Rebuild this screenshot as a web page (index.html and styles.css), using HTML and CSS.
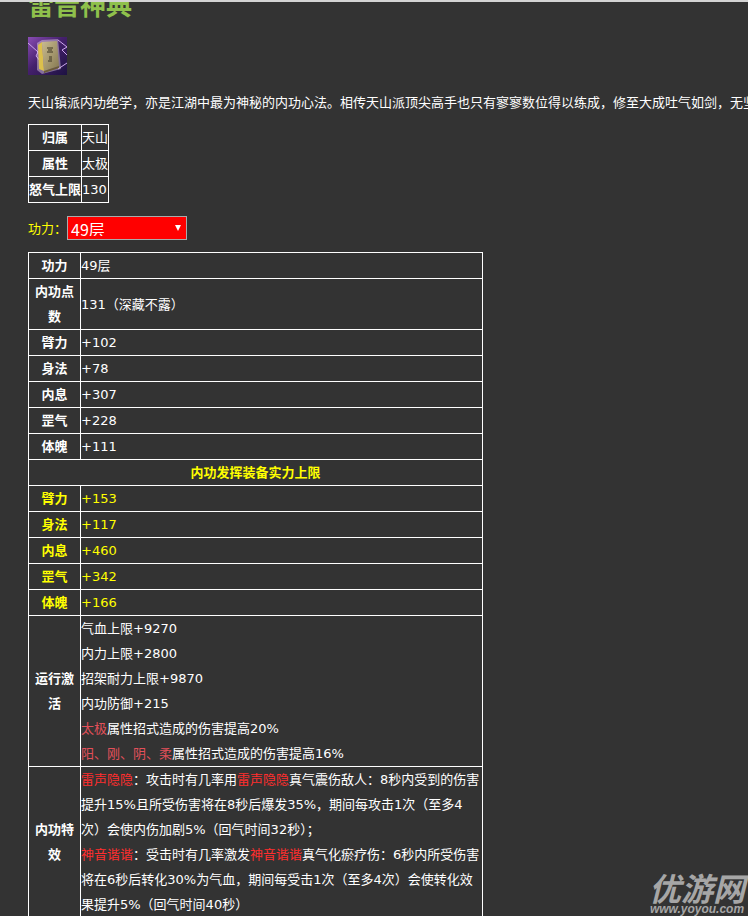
FILE: index.html
```html
<!DOCTYPE html>
<html lang="zh">
<head>
<meta charset="utf-8">
<title>雷音神典</title>
<link rel="stylesheet" href="styles.css">
</head>
<body>
<main class="page">
  <h2 class="title">雷音神典</h2>
  <svg class="skill-icon" viewBox="0 0 39 38" aria-label="雷音神典">
    <defs>
      <linearGradient id="sky" x1="0" y1="0" x2="1" y2="1">
        <stop offset="0" stop-color="#8a4db5"/>
        <stop offset="0.45" stop-color="#45206c"/>
        <stop offset="1" stop-color="#1d1242"/>
      </linearGradient>
      <linearGradient id="cover" x1="0" y1="0" x2="1" y2="1">
        <stop offset="0" stop-color="#c9bb90"/>
        <stop offset="1" stop-color="#857850"/>
      </linearGradient>
    </defs>
    <rect width="39" height="38" fill="url(#sky)"/>
    <path d="M0 6 L10 15 L8 19 L14 26 M30 3 L39 10 L34 13 L39 18 M30 32 L39 26" fill="none" stroke="#cfa8ee" stroke-width="1"/>
    <path d="M9 6 L14 3 L30 2 L33 32 L14 37 L9 33 Z" fill="#e6d9e6" opacity=".45"/>
    <path d="M10 8 L14 5 L16 34 L11 32 Z" fill="#dcc04c"/>
    <path d="M14 5 L29 4 L31 29 L16 34 Z" fill="url(#cover)"/>
    <path d="M16 34 L31 29 L31 31 L16 36 Z" fill="#6a5a36"/>
    <path d="M19 11 h6 M20 13 h4 M19 15 h6 M21 20 h3 M21 22 h3 M20 24 h4" stroke="#3c3522" stroke-width="1" fill="none"/>
  </svg>
  <p class="intro">天山镇派内功绝学，亦是江湖中最为神秘的内功心法。相传天山派顶尖高手也只有寥寥数位得以练成，修至大成吐气如剑，无坚不摧。</p>

  <table class="grid meta">
    <tr><th>归属</th><td>天山</td></tr>
    <tr><th>属性</th><td>太极</td></tr>
    <tr><th>怒气上限</th><td>130</td></tr>
  </table>

  <div class="level">
    <label class="level-label" for="level">功力：</label>
    <span class="select-wrap">
      <select class="level-select" id="level">
        <option>49层</option>
      </select>
    </span>
  </div>

  <table class="grid stats">
    <colgroup><col class="col-key"><col></colgroup>
    <tr><th>功力</th><td>49层</td></tr>
    <tr><th>内功点数</th><td>131（深藏不露）</td></tr>
    <tr><th>臂力</th><td>+102</td></tr>
    <tr><th>身法</th><td>+78</td></tr>
    <tr><th>内息</th><td>+307</td></tr>
    <tr><th>罡气</th><td>+228</td></tr>
    <tr><th>体魄</th><td>+111</td></tr>
    <tr class="hl"><th colspan="2">内功发挥装备实力上限</th></tr>
    <tr class="hl"><th>臂力</th><td>+153</td></tr>
    <tr class="hl"><th>身法</th><td>+117</td></tr>
    <tr class="hl"><th>内息</th><td>+460</td></tr>
    <tr class="hl"><th>罡气</th><td>+342</td></tr>
    <tr class="hl"><th>体魄</th><td>+166</td></tr>
    <tr>
      <th>运行激活</th>
      <td>气血上限+9270<br>内力上限+2800<br>招架耐力上限+9870<br>内功防御+215<br><span class="soft">太极</span>属性招式造成的伤害提高20%<br><span class="soft">阳、刚、阴、柔</span>属性招式造成的伤害提高16%</td>
    </tr>
    <tr>
      <th>内功特效</th>
      <td><span class="hot">雷声隐隐</span>：攻击时有几率用<span class="hot">雷声隐隐</span>真气震伤敌人：8秒内受到的伤害提升15%且所受伤害将在8秒后爆发35%，期间每攻击1次（至多4次）会使内伤加剧5%（回气时间32秒）；<br><span class="hot">神音谐谐</span>：受击时有几率激发<span class="hot">神音谐谐</span>真气化瘀疗伤：6秒内所受伤害将在6秒后转化30%为气血，期间每受击1次（至多4次）会使转化效果提升5%（回气时间40秒）</td>
    </tr>
  </table>
</main>

<div class="watermark">
  <span class="wm-name">优游网</span>
  <span class="wm-url">www.yoyou.com</span>
</div>
</body>
</html>
```

FILE: styles.css
```css
html, body {
  margin: 0;
  height: 100%;
  overflow: hidden;
}

body {
  position: relative;
  background: #333;
  border-top: 2px solid #d4d4d4;
  box-sizing: border-box;
  color: #fff;
  font: 13px/25px "DejaVu Sans", "Noto Sans CJK SC", sans-serif;
}

.page {
  padding-left: 28px;
  display: flex;
  flex-direction: column;
  align-items: flex-start;
}

.title {
  margin: -15px 0 0;
  height: 33px;
  font-family: "Noto Sans CJK SC", sans-serif;
  font-size: 26px;
  line-height: 33px;
  font-weight: 700;
  color: #8fc04c;
  white-space: nowrap;
}

.skill-icon {
  display: block;
  width: 39px;
  height: 38px;
  margin-top: 17px;
}

.intro {
  margin: 15px 0 0;
  width: 800px;
  white-space: nowrap;
}

.grid {
  border-collapse: collapse;
  border: 1px solid #fff;
}

.grid th,
.grid td {
  border: 1px solid #fff;
  padding: 0;
  line-height: 25px;
}

.grid th {
  font-weight: 700;
  text-align: center;
}

.grid td {
  text-align: left;
}

.meta {
  margin-top: 9px;
}

.meta th {
  width: 52px;
  white-space: nowrap;
}

.meta td {
  width: 26px;
}

.level {
  display: flex;
  align-items: center;
  margin-top: 13px;
  height: 24px;
}

.level-label {
  color: #ff0;
  width: 39px;
}

.select-wrap {
  position: relative;
  display: block;
  height: 24px;
}

.select-wrap::after {
  content: "";
  position: absolute;
  left: 108px;
  top: 9px;
  border-style: solid;
  border-width: 6px 3px 0;
  border-color: #fff transparent transparent;
}

.level-select {
  display: block;
  appearance: none;
  width: 120px;
  height: 24px;
  margin: 0;
  padding: 0 0 3px 3px;
  background: #f00;
  color: #fff;
  border: 1px solid #aaa;
  border-radius: 0;
  font: 16px "Noto Sans CJK SC", sans-serif;
}

.stats {
  width: 455px;
  margin-top: 12px;
  table-layout: fixed;
}

.col-key {
  width: 52px;
}

.stats th {
  padding: 0 6px;
}

.hl th,
.hl td {
  color: #ff0;
}

.soft {
  color: #e2505a;
}

.hot {
  color: #ff2e2e;
}

.watermark {
  position: absolute;
  right: 2px;
  bottom: 0;
  width: 98px;
  display: flex;
  flex-direction: column;
  align-items: center;
  color: #a6a6a6;
  font-style: italic;
  font-weight: 700;
}

.wm-name {
  font-family: "Noto Sans CJK SC", sans-serif;
  font-size: 32px;
  line-height: 31px;
  white-space: nowrap;
}

.wm-url {
  font: italic 700 12px/13px "Liberation Sans", sans-serif;
  white-space: nowrap;
}
```
